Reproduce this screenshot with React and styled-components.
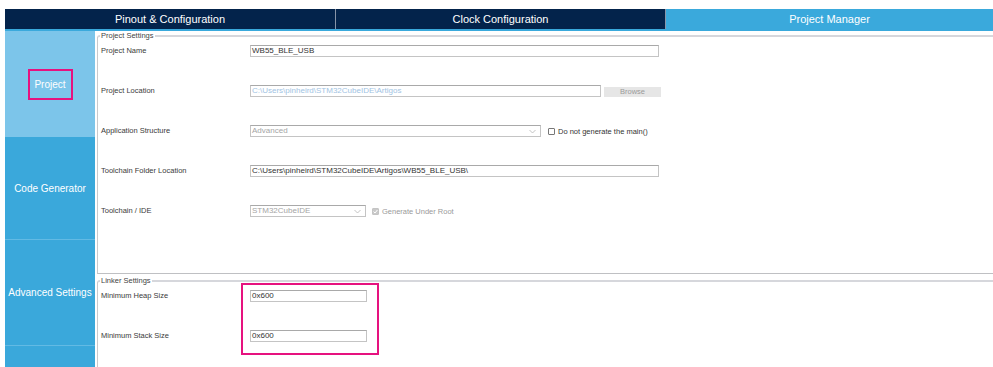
import styled, { createGlobalStyle } from "styled-components";

const GlobalStyle = createGlobalStyle`
  html, body {
    margin: 0;
    padding: 0;
    background: #ffffff;
  }
  body {
    font-family: "Liberation Sans", Arial, sans-serif;
  }
`;

const Page = styled.div`
  width: 993px;
  height: 367px;
  box-sizing: border-box;
  padding: 9px 0 0 5px;
  overflow: hidden;
  background: #fff;
`;

const TabBar = styled.div`
  display: grid;
  grid-template-columns: 330px 329px 1fr;
  gap: 1px;
  height: 20px;
  background: #8794a8;
  border-bottom: 2px solid #3aa9dc;
`;

const Tab = styled.div`
  display: flex;
  align-items: center;
  justify-content: center;
  background: ${({ active }) => (active ? "#3aa9dc" : "#03234b")};
  color: #fff;
  font-size: 11px;
`;

const Body = styled.div`
  display: flex;
  height: 336px;
`;

const Sidebar = styled.div`
  width: 90px;
  display: flex;
  flex-direction: column;
  background: #3aa8db;
`;

const SideItem = styled.div`
  height: ${({ h }) => h}px;
  flex-shrink: 0;
  display: flex;
  align-items: center;
  justify-content: center;
  background: ${({ active }) => (active ? "#7cc5ea" : "#3aa8db")};
  border-bottom: 1px solid ${({ active }) => (active ? "#7cc5ea" : "#62bae4")};
  color: #fff;
  font-size: 10px;
  white-space: nowrap;
`;

const Highlight = styled.span`
  display: inline-flex;
  align-items: center;
  justify-content: center;
  width: 45px;
  height: 31px;
  margin-top: 2px;
  box-sizing: border-box;
  border: 2px solid #e6127f;
`;

const Content = styled.div`
  flex: 1;
  padding-left: 2px;
  display: flex;
  flex-direction: column;
`;

const Group = styled.fieldset`
  margin: ${({ mt }) => mt || 0}px 0 0 0;
  padding: ${({ pad }) => pad};
  border: none;
  border-top: 2px solid #d6d7dc;
  border-left: 1px solid #c9c9cc;
  border-bottom: ${({ closed }) => (closed ? "1px solid #bfc0c3" : "none")};
  border-top-left-radius: 3px;
  min-width: 0;
  flex: ${({ grow }) => (grow ? 1 : "none")};
`;

const Legend = styled.legend`
  font-size: 7.5px;
  line-height: 10px;
  color: #444;
  padding: 0 1px;
  margin-left: -1px;
`;

const Rows = styled.div`
  display: flex;
  flex-direction: column;
  gap: 28px;
`;

const Row = styled.div`
  display: grid;
  grid-template-columns: 149px auto;
  align-items: center;
  height: 12px;
`;

const Label = styled.div`
  font-size: 7.5px;
  color: #3a3a3a;
  line-height: 12px;
  height: 12px;
  white-space: nowrap;
`;

const Controls = styled.div`
  display: flex;
  align-items: center;
  gap: ${({ gap }) => gap || 0}px;
`;

const Field = styled.div`
  width: ${({ w }) => w}px;
  height: 12px;
  box-sizing: border-box;
  border: 1px solid #c4c4c4;
  border-top-color: #a9a9a9;
  background: #fff;
  font-size: 8px;
  line-height: 10px;
  padding-left: 1px;
  color: ${({ tone }) =>
    tone === "blue" ? "#9fc3e3" : tone === "gray" ? "#a5a5a5" : "#333"};
  display: flex;
  align-items: center;
  justify-content: space-between;
  white-space: nowrap;
  overflow: hidden;
`;

const Chevron = styled.svg`
  width: 7px;
  height: 5px;
  margin-right: 4px;
`;

const Button = styled.div`
  width: 57px;
  height: 10px;
  margin-top: 1px;
  background: #e6e6e6;
  color: #9a9a9a;
  font-size: 7.5px;
  line-height: 10px;
  text-align: center;
`;

const Check = styled.label`
  display: flex;
  align-items: center;
  gap: 3px;
  font-size: 7.5px;
  color: ${({ muted }) => (muted ? "#9a9a9a" : "#333")};
  white-space: nowrap;
`;

const Box = styled.span`
  width: 7px;
  height: 7px;
  box-sizing: border-box;
  border: 1px solid ${({ checked }) => (checked ? "#c4c4c4" : "#777")};
  border-radius: 1px;
  background: ${({ checked }) => (checked ? "#c9c9c9" : "#fff")};
  display: inline-flex;
  align-items: center;
  justify-content: center;
`;

const LinkerBody = styled.div`
  display: flex;
  align-items: flex-start;
  margin-top: -3px;
`;

const LabelCol = styled.div`
  width: 140px;
  padding-top: 7px;
  display: flex;
  flex-direction: column;
  gap: 28px;
`;

const Marked = styled.div`
  display: flex;
  flex-direction: column;
  gap: 28px;
  padding: 5px 10px 11px 7px;
  border: 2px solid #e6127f;
`;

const Select = ({ w, children }) => (
  <Field w={w} tone="gray">
    <span>{children}</span>
    <Chevron viewBox="0 0 7 5">
      <path d="M0.5 1 L3.5 4 L6.5 1" fill="none" stroke="#b5b5b5" strokeWidth="0.8" />
    </Chevron>
  </Field>
);

const Checkbox = ({ checked, muted, children }) => (
  <Check muted={muted}>
    <Box checked={checked}>
      {checked && (
        <svg width="5" height="5" viewBox="0 0 5 5">
          <path d="M0.6 2.6 L2 4 L4.4 1" fill="none" stroke="#fff" strokeWidth="1" />
        </svg>
      )}
    </Box>
    {children}
  </Check>
);

export default function App() {
  return (
    <>
      <GlobalStyle />
      <Page>
        <TabBar>
          <Tab>Pinout &amp; Configuration</Tab>
          <Tab>Clock Configuration</Tab>
          <Tab active>Project Manager</Tab>
        </TabBar>
        <Body>
          <Sidebar>
            <SideItem active h={105}>
              <Highlight>Project</Highlight>
            </SideItem>
            <SideItem h={102}>Code Generator</SideItem>
            <SideItem h={105}>Advanced Settings</SideItem>
            <SideItem h={24} />
          </Sidebar>
          <Content>
            <Group closed pad="4px 0 56px 3px">
              <Legend>Project Settings</Legend>
              <Rows>
                <Row>
                  <Label>Project Name</Label>
                  <Field w={409}>WB55_BLE_USB</Field>
                </Row>
                <Row>
                  <Label>Project Location</Label>
                  <Controls gap={3}>
                    <Field w={351} tone="blue">
                      C:\Users\pinheird\STM32CubeIDE\Artigos
                    </Field>
                    <Button>Browse</Button>
                  </Controls>
                </Row>
                <Row>
                  <Label>Application Structure</Label>
                  <Controls gap={7}>
                    <Select w={291}>Advanced</Select>
                    <Checkbox>Do not generate the main()</Checkbox>
                  </Controls>
                </Row>
                <Row>
                  <Label>Toolchain Folder Location</Label>
                  <Field w={409}>C:\Users\pinheird\STM32CubeIDE\Artigos\WB55_BLE_USB\</Field>
                </Row>
                <Row>
                  <Label>Toolchain / IDE</Label>
                  <Controls gap={6}>
                    <Select w={116}>STM32CubeIDE</Select>
                    <Checkbox checked muted>Generate Under Root</Checkbox>
                  </Controls>
                </Row>
              </Rows>
            </Group>
            <Group grow mt={2} pad="0 0 0 3px">
              <Legend>Linker Settings</Legend>
              <LinkerBody>
                <LabelCol>
                  <Label>Minimum Heap Size</Label>
                  <Label>Minimum Stack Size</Label>
                </LabelCol>
                <Marked>
                  <Field w={117}>0x600</Field>
                  <Field w={117}>0x600</Field>
                </Marked>
              </LinkerBody>
            </Group>
          </Content>
        </Body>
      </Page>
    </>
  );
}
